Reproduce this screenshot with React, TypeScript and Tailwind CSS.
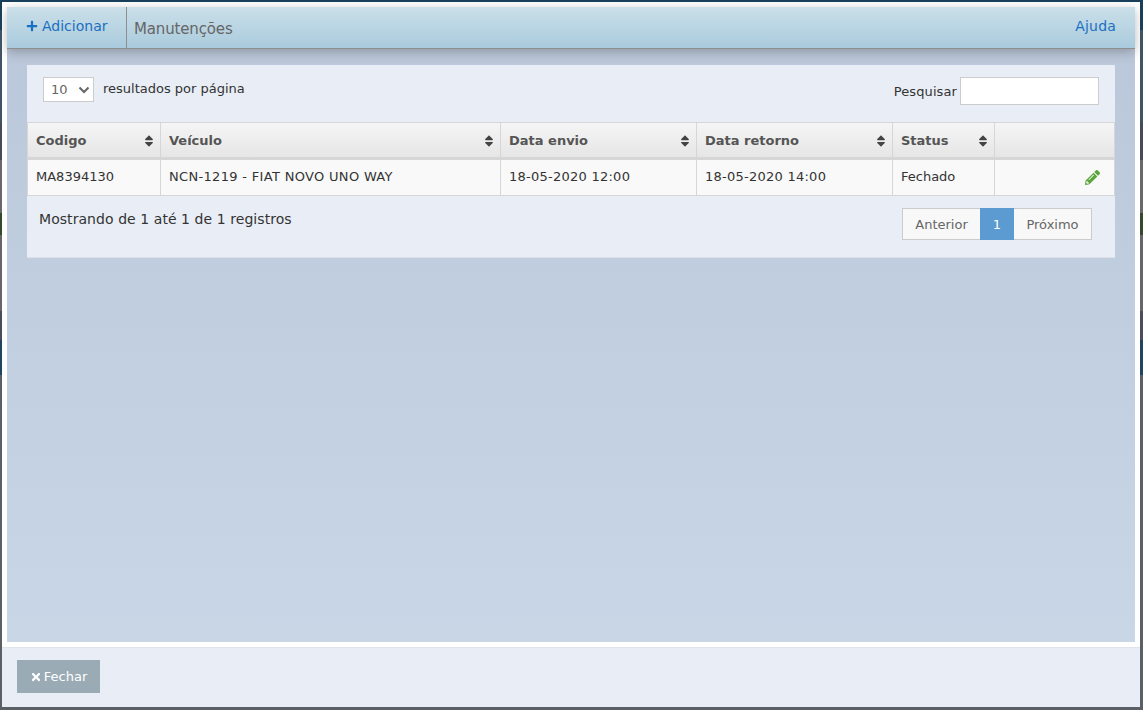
import { FaPlus, FaTimes, FaSort, FaPencilAlt } from "react-icons/fa";

const font = "font-['DejaVu_Sans','Liberation_Sans',sans-serif]";

const heads = [
  { label: "Codigo", w: "w-[133px]" },
  { label: "Veículo", w: "w-[340px]" },
  { label: "Data envio", w: "w-[196px]" },
  { label: "Data retorno", w: "w-[196px]" },
  { label: "Status", w: "w-[102px]" },
];

const cells = [
  { text: "MA8394130", cls: "" },
  { text: "NCN-1219 - FIAT NOVO UNO WAY", cls: "tracking-[0.32px]" },
  { text: "18-05-2020 12:00", cls: "tracking-[0.25px]" },
  { text: "18-05-2020 14:00", cls: "tracking-[0.25px]" },
  { text: "Fechado", cls: "" },
];

export default function App() {
  return (
    <div
      className={`${font} h-[710px] w-[1143px] overflow-hidden flex flex-col pt-[2px] pl-[2px] pr-[3px] pb-[3px] bg-[linear-gradient(180deg,#18405c_0,#18405c_30px,#3f5566_30px,#3f5566_122px,#474a57_122px,#474a57_160px,#69696b_160px,#69696b_213px,#35492b_213px,#35492b_235px,#66666a_235px,#66666a_311px,#4a4e5a_311px,#4a4e5a_340px,#1f4560_340px,#1f4560_375px,#5b5f66_375px,#5b5f66_710px)]`}
    >
      <div className="flex-1 flex flex-col bg-white">
        <div className="h-[645px] shrink-0 p-[5px] flex flex-col">
          <div className="flex-1 flex flex-col bg-[linear-gradient(180deg,#bac7da,#c9d6e6)]">
            <header className="h-[42px] shrink-0 flex items-stretch border-b border-[#8e8e8e] bg-[linear-gradient(180deg,#cbdfe9,#a9cbdd)] shadow-[0_3px_10px_rgba(60,60,60,0.35)] pr-[19px]">
              <a className="w-[120px] flex items-center gap-[4px] pl-[19px] pb-[3px] text-[14px] text-[#1a70c0] border-r border-[#8e8e8e]">
                <FaPlus className="text-[12px]" />
                <span>Adicionar</span>
              </a>
              <h1 className="flex-1 pl-[7px] pt-[13px] text-[15px] leading-[18px] font-normal tracking-[-0.15px] text-[#666]">Manutenções</h1>
              <a className="pt-[10px] text-[14px] leading-[18px] tracking-[0.2px] text-[#1a70c0]">Ajuda</a>
            </header>

            <section className="mx-5 mt-[16px] h-[193px] flex flex-col bg-[#e9eef6] border-b border-[#dde2ea]">
              <div className="h-[57px] shrink-0 flex items-start justify-between pt-3 pl-4 pr-4">
                <div className="flex items-center">
                  <div className="w-[51px] h-[25px] flex items-center justify-between pl-[7px] pr-[3px] bg-white border border-[#ccc] text-[13px] text-[#666]">
                    <span>10</span>
                    <svg width="12" height="8" viewBox="0 0 12 8" fill="none" stroke="#666" strokeWidth="2"><path d="M1.5 1.5 6 6l4.5-4.5" /></svg>
                  </div>
                  <span className="ml-[9px] pb-[2px] text-[13px] leading-[20px] text-[#333]">resultados por página</span>
                </div>
                <div className="flex items-center">
                  <span className="mr-[3px] mt-[2px] text-[13px] tracking-[0.1px] text-[#333]">Pesquisar</span>
                  <div className="w-[139px] h-[28px] bg-white border border-[#ccc]" />
                </div>
              </div>

              <table className="w-[1088px] table-fixed border-collapse">
                <thead>
                  <tr className="h-[36px] bg-[linear-gradient(180deg,#f5f5f5,#e5e5e5)]">
                    {heads.map((h) => (
                      <th key={h.label} className={`${h.w} border border-[#d6d6d6] border-b-[3px] pl-[8px] pr-[4px] pt-[1px] text-left text-[13px] font-bold text-[#555]`}>
                        <div className="flex items-center justify-between">
                          <span>{h.label}</span>
                          <FaSort className="text-[14px] text-[#444]" />
                        </div>
                      </th>
                    ))}
                    <th className="border border-[#d6d6d6] border-b-[3px]" />
                  </tr>
                </thead>
                <tbody>
                  <tr className="h-[37px] bg-[#f9f9f9]">
                    {cells.map((c) => (
                      <td key={c.text} className={`${c.cls} border border-[#d6d6d6] px-[8px] pb-[2px] text-[13px] text-[#333]`}>{c.text}</td>
                    ))}
                    <td className="border border-[#d6d6d6] pr-[14px]">
                      <div className="flex justify-end">
                        <FaPencilAlt className="text-[15px] text-[#5ba53c]" />
                      </div>
                    </td>
                  </tr>
                </tbody>
              </table>

              <div className="flex items-start justify-between pt-3 pl-3 pr-[23px]">
                <span className="text-[14px] leading-[22px] tracking-[0.06px] text-[#333]">Mostrando de 1 até 1 de 1 registros</span>
                <div className="flex h-[32px] text-[13px] text-[#666]">
                  <span className="w-[78px] pt-[1px] flex items-center justify-center bg-[#f8f8f8] border border-[#ccc] border-r-0">Anterior</span>
                  <span className="w-[34px] pt-[1px] flex items-center justify-center bg-[#5b9bd1] text-white">1</span>
                  <span className="w-[78px] pt-[1px] flex items-center justify-center bg-[#f8f8f8] border border-[#ccc] border-l-0">Próximo</span>
                </div>
              </div>
            </section>
          </div>
        </div>
        <footer className="flex-1 border-t border-[#dfe3ea] bg-[#e9eef6] pl-[15px] pt-3">
          <button className="w-[83px] h-[33px] flex items-center justify-center gap-[2px] bg-[#9aabb5] text-[13px] text-white">
            <FaTimes className="text-[12px]" />
            <span>Fechar</span>
          </button>
        </footer>
      </div>
    </div>
  );
}
